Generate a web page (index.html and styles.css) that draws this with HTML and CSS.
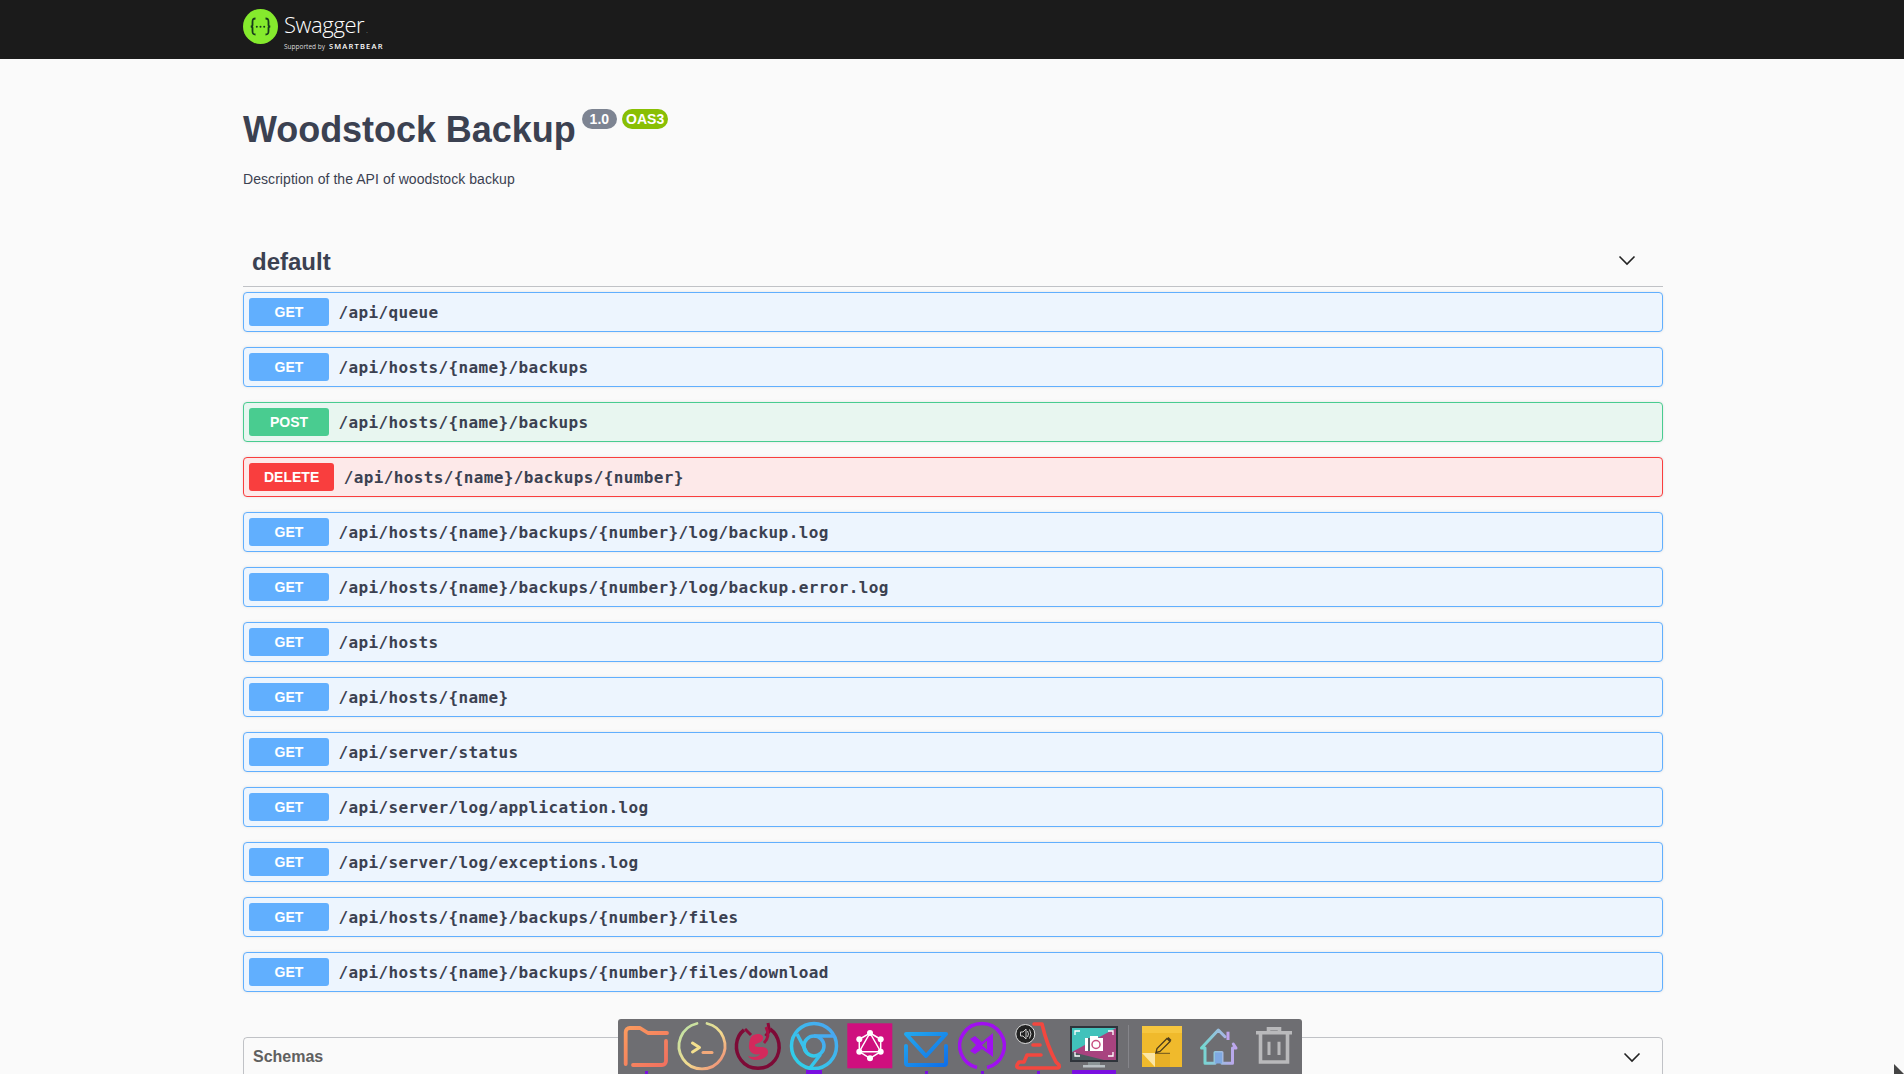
FILE: index.html
```html
<!DOCTYPE html>
<html lang="en">
<head>
<meta charset="utf-8">
<title>Woodstock Backup</title>
<link rel="stylesheet" href="styles.css">
</head>
<body>
<header class="topbar">
  <div class="wrapper topbar-inner">
    <svg class="logo-mark" width="35" height="35" viewBox="0 0 35 35"><circle cx="17.5" cy="17.5" r="17.5" fill="#85ea2d"/><path d="M12.5 9.5c-3 0-3 1.500-3 3.500v3c0 1.200-.8 1.500-1.800 1.500 1 0 1.800.3 1.800 1.500v3c0 2 0 3.500 3 3.500M22.500 9.500c3 0 3 1.500 3 3.500v3c0 1.200.8 1.500 1.800 1.500-1 0-1.800.3-1.800 1.500v3c0 2 0 3.500-3 3.500" fill="none" stroke="#173b1b" stroke-width="1.800"/><circle cx="13.800" cy="17.800" r="1" fill="#173b1b"/><circle cx="17.500" cy="17.800" r="1" fill="#173b1b"/><circle cx="21.200" cy="17.800" r="1" fill="#173b1b"/></svg>
    <div class="logo-text">
      <span class="logo-name">Swagger<span class="logo-dot">.</span></span>
      <span class="logo-sub"><span class="logo-by">Supported by</span> <span class="logo-bear">SMARTBEAR</span></span>
    </div>
  </div>
</header>

<main class="wrapper">
  <section class="info">
    <div class="title-row">
      <h1 class="title">Woodstock Backup</h1>
      <span class="badge badge-version">1.0</span>
      <span class="badge badge-oas">OAS3</span>
    </div>
    <p class="description">Description of the API of woodstock backup</p>
  </section>

  <section class="tag">
    <div class="tag-head">
      <h2 class="tag-name">default</h2>
      <svg class="chevron" width="20" height="20" viewBox="0 0 20 20"><path d="M2.500 5.500 10 13l7.500-7.500" fill="none" stroke="#222" stroke-width="1.600"/></svg>
    </div>
    <div class="op get"><span class="method">GET</span><span class="path">/api/queue</span></div>
    <div class="op get"><span class="method">GET</span><span class="path">/api/hosts/{name}/backups</span></div>
    <div class="op post"><span class="method">POST</span><span class="path">/api/hosts/{name}/backups</span></div>
    <div class="op delete"><span class="method">DELETE</span><span class="path">/api/hosts/{name}/backups/{number}</span></div>
    <div class="op get"><span class="method">GET</span><span class="path">/api/hosts/{name}/backups/{number}/log/backup.log</span></div>
    <div class="op get"><span class="method">GET</span><span class="path">/api/hosts/{name}/backups/{number}/log/backup.error.log</span></div>
    <div class="op get"><span class="method">GET</span><span class="path">/api/hosts</span></div>
    <div class="op get"><span class="method">GET</span><span class="path">/api/hosts/{name}</span></div>
    <div class="op get"><span class="method">GET</span><span class="path">/api/server/status</span></div>
    <div class="op get"><span class="method">GET</span><span class="path">/api/server/log/application.log</span></div>
    <div class="op get"><span class="method">GET</span><span class="path">/api/server/log/exceptions.log</span></div>
    <div class="op get"><span class="method">GET</span><span class="path">/api/hosts/{name}/backups/{number}/files</span></div>
    <div class="op get"><span class="method">GET</span><span class="path">/api/hosts/{name}/backups/{number}/files/download</span></div>
  </section>

  <section class="schemas">
    <h3 class="schemas-title">Schemas</h3>
    <svg class="chevron" width="20" height="20" viewBox="0 0 20 20"><path d="M2.500 5.500 10 13l7.500-7.500" fill="none" stroke="#222" stroke-width="1.600"/></svg>
  </section>
</main>

<nav class="dock">
  <div class="dock-item">
    <svg width="56" height="55" viewBox="0 0 56 55"><defs><linearGradient id="gf" x1="0" y1="0" x2="1" y2="1"><stop offset="0" stop-color="#fb9a5e"/><stop offset="1" stop-color="#f1705f"/></linearGradient></defs><path d="M7.700 45V13a4 4 0 0 1 4-4H22l8 5H49M48 22V42a4 4 0 0 1-4 4H15" fill="none" stroke="url(#gf)" stroke-width="3.800" stroke-linecap="round" stroke-linejoin="round"/><rect x="27" y="52" width="3" height="3" fill="#7a10e0"/></svg>
  </div>
  <div class="dock-item">
    <svg width="56" height="55" viewBox="0 0 56 55"><defs><linearGradient id="gt" x1="0" y1="0" x2="1" y2="1"><stop offset="0" stop-color="#b7e3a8"/><stop offset=".55" stop-color="#f3dc8f"/><stop offset="1" stop-color="#ef7d70"/></linearGradient></defs><path d="M33 4.500a23 23 0 1 1-10 0" fill="none" stroke="url(#gt)" stroke-width="2.800" stroke-linecap="round"/><path d="M18.500 24l7 4.500-7 4.500" fill="none" stroke="#f4e08e" stroke-width="3" stroke-linecap="round" stroke-linejoin="round"/><path d="M29 33.500h9" stroke="#f2a97a" stroke-width="3" stroke-linecap="round"/></svg>
  </div>
  <div class="dock-item">
    <svg width="56" height="55" viewBox="0 0 56 55"><path d="M14 11C5 18 4 32 11 41c8 11 26 11 34 0 7-10 5-24-5-31" fill="none" stroke="#7d0a36" stroke-width="3.500"/><path d="M38 4l1.500 8-4 5M15 10l6 6" fill="none" stroke="#8b0a39" stroke-width="3"/><path d="M21 18c5-5 13-3 12 2-1 4-7 4-8 6-1 3 7 1 11 3 4 3 2 9-4 11-6 2-12 1-14-3 5 2 11 1 12-2-7 2-12-3-11-9 0-3 1-6 2-8z" fill="#d32a5c"/><path d="M36 8c3 6 2 12-2 16" fill="none" stroke="#a81043" stroke-width="3"/></svg>
  </div>
  <div class="dock-item">
    <svg width="56" height="55" viewBox="0 0 56 55"><defs><linearGradient id="gc" x1="0" y1="1" x2="1" y2="0"><stop offset="0" stop-color="#2cd5e8"/><stop offset="1" stop-color="#4aa3f2"/></linearGradient></defs><g fill="none" stroke="url(#gc)" stroke-width="3.500"><circle cx="28" cy="27" r="22.500"/><circle cx="28" cy="27" r="10"/><path d="M28 17H49M11 15l10 19M34.500 35.500L24 49"/></g><rect x="20" y="51" width="16" height="4" fill="#7a10e0"/></svg>
  </div>
  <div class="dock-item">
    <svg width="56" height="55" viewBox="0 0 56 55"><rect x="5.300" y="4.300" width="45" height="45" fill="#cf0f7e"/><g fill="none" stroke="#fff" stroke-width="1.500"><path d="M28 14L38.700 20.300V32.700L28 39.300L17.300 32.700V20.300Z"/><path d="M28 14L38.700 32.700H17.300Z"/></g><g fill="#fff"><circle cx="28" cy="14" r="3"/><circle cx="38.700" cy="20.300" r="3"/><circle cx="38.700" cy="32.700" r="3"/><circle cx="28" cy="39.300" r="3"/><circle cx="17.300" cy="32.700" r="3"/><circle cx="17.300" cy="20.300" r="3"/></g></svg>
  </div>
  <div class="dock-item">
    <svg width="56" height="55" viewBox="0 0 56 55"><defs><linearGradient id="gm" x1="0" y1="0" x2="1" y2="1"><stop offset="0" stop-color="#22a7ee"/><stop offset="1" stop-color="#0f70ea"/></linearGradient></defs><path d="M8 27V44a2 2 0 0 0 2 2H46a2 2 0 0 0 2-2V27M8 15h40L28 37Z" fill="none" stroke="url(#gm)" stroke-width="4" stroke-linejoin="round" stroke-linecap="round"/><rect x="27" y="52" width="3" height="3" fill="#7a10e0"/></svg>
  </div>
  <div class="dock-item">
    <svg width="56" height="55" viewBox="0 0 56 55"><path d="M23 48.500a22.300 22.300 0 1 1 10 0" fill="none" stroke="#a010f0" stroke-width="3.500"/><path fill-rule="evenodd" d="M39 14V38L28 30 21 35 16 32 22 26 16 20 21 17 28 23ZM33 21.500 28 26.200 33 30.500Z" fill="#a010f0"/><rect x="27" y="52" width="3" height="3" fill="#7a10e0"/></svg>
  </div>
  <div class="dock-item">
    <svg width="56" height="55" viewBox="0 0 56 55"><g fill="none" stroke="#f3473f" stroke-width="3.600" stroke-linecap="round" stroke-linejoin="round"><path d="M24 5h8c3 13 8 27 14 38l3 3q1 3-2 3H10q-4 0-3-3l2-3h5l3-7h14"/><path d="M23 26h7"/></g><rect x="27" y="52" width="3" height="3" fill="#7a10e0"/><circle cx="15.300" cy="15" r="9.500" fill="#222" stroke="#ddd" stroke-width="1"/><path d="M10.500 13h2.500l3-3v10l-3-3h-2.500zM17.500 12q2 3 0 6M19.500 10.500q3 4.500 0 9" fill="none" stroke="#ccc" stroke-width="1"/></svg>
  </div>
  <div class="dock-item">
    <svg width="56" height="55" viewBox="0 0 56 55"><rect x="4" y="7" width="48" height="36" fill="#2f343b"/><rect x="6" y="9" width="44" height="32" fill="#41c2bb"/><path d="M6 33 50 9V41H6Z" fill="#a8437f"/><path d="M6 33V41H38Z" fill="#4a5a5e"/><path d="M9 16v-4h5M42 12h5v4M9 33v4h5M42 37h5v-4" fill="none" stroke="#fff" stroke-width="1.300"/><rect x="19" y="19" width="18" height="13" fill="#fff"/><rect x="24" y="17" width="8" height="3" fill="#fff"/><rect x="22" y="19" width="2" height="13" fill="#55606a"/><circle cx="30" cy="25.500" r="4" fill="none" stroke="#c74f80" stroke-width="1.500"/><rect x="22" y="43" width="12" height="3" fill="#8b9496"/><rect x="17" y="46" width="22" height="2.500" fill="#b9c0c4"/><rect x="6" y="51" width="44" height="4" fill="#7a10e0"/></svg>
  </div>
  <div class="dock-sep"></div>
  <div class="dock-item">
    <svg width="56" height="55" viewBox="0 0 56 55"><rect x="8" y="7" width="40" height="41" fill="#f0ba2c"/><rect x="8" y="7" width="40" height="7" fill="#f6c63f"/><path d="M21 34H36V48H21Z" fill="#e0a825" opacity=".55"/><path d="M8 34h13v14z" fill="#fbe6a6"/><path d="M22 33.500l1-4L33 19.500l3 3L26 32.500z" fill="none" stroke="#4b3c1c" stroke-width="1.300"/><path d="M33 19.500l1.500-1.500 3 3-1.500 1.500z" fill="#4b3c1c"/><path d="M21 34.300H36" stroke="#4b3c1c" stroke-width=".8"/></svg>
  </div>
  <div class="dock-item">
    <svg width="56" height="55" viewBox="0 0 56 55"><defs><linearGradient id="gh" gradientUnits="userSpaceOnUse" x1="10" y1="0" x2="46" y2="0"><stop offset="0" stop-color="#6fdccf"/><stop offset="1" stop-color="#c0a4ee"/></linearGradient></defs><path d="M11.500 29L28.300 11 35 17.700M11.500 29H15V44.300H25V33.500H32V44.300H42.500V29H46L43.300 25" fill="none" stroke="url(#gh)" stroke-width="3" stroke-linejoin="round" stroke-linecap="round"/><path d="M38 12.700V21" stroke="#c0a4ee" stroke-width="3"/><rect x="25" y="33.500" width="7" height="11" fill="#7fa9e2"/></svg>
  </div>
  <div class="dock-item">
    <svg width="56" height="55" viewBox="0 0 56 55"><g fill="none" stroke="#b9b9bb" stroke-width="3.600"><path d="M10 13.700H46"/><path d="M22.500 13.700V9.800H33.500V13.700"/><path d="M14.500 13.700V43H41.500V13.700"/><path d="M23 22.700V36M33 22.700V36" stroke-width="3"/></g></svg>
  </div>
</nav>

<svg class="cursor" width="10" height="12" viewBox="0 0 10 12"><path d="M0 0 10 10V12H0Z" fill="#444"/></svg>
</body>
</html>
```
FILE: styles.css
```css
* { box-sizing: border-box; }
html, body { margin: 0; height: 100%; overflow: hidden; }
body { background: #fafafa; font-family: "Liberation Sans", Arial, sans-serif; color: #3b4151; }

.wrapper { width: 1460px; margin-left: 223px; padding: 0 20px; }

.topbar { height: 59px; background: #1b1b1b; }
.topbar-inner { display: flex; align-items: flex-start; gap: 6px; padding-top: 9px; }
.logo-mark { flex: none; }
.logo-text { display: flex; flex-direction: column; color: #fff; }
.logo-name { font-family: "Open Sans", sans-serif; font-weight: 300; font-size: 22px; line-height: 28px; letter-spacing: -.4px; margin-top: 1px; }
.logo-dot { font-size: 6px; margin-left: 2px; }
.logo-sub { display: flex; align-items: baseline; gap: 4px; font-family: "Open Sans", sans-serif; line-height: 9px; margin-top: -3px; }
.logo-by { font-size: 6.500px; color: #ddd; }
.logo-bear { font-size: 7.500px; font-weight: 600; letter-spacing: 1.200px; }

.info { padding-top: 50px; }
.title-row { display: flex; align-items: flex-start; height: 40px; }
.title { margin: 1px 0 0 0; font-size: 36px; line-height: 40px; font-weight: 700; letter-spacing: -.05px; color: #3b4151; }
.badge { height: 20px; line-height: 20px; border-radius: 10px; font-size: 14px; font-weight: 700; color: #fff; }
.badge-version { background: #7d8492; margin-left: 6px; padding: 0 8px; }
.badge-oas { background: #89bf04; margin-left: 5px; padding: 0 4px; }
.description { margin: 21px 0 0; font-size: 14px; line-height: 18px; letter-spacing: .06px; color: #3b4151; }

.tag { margin-top: 49px; }
.tag-head { display: flex; justify-content: space-between; align-items: center; height: 50px; padding: 0 26px 0 9px; border-bottom: 1px solid rgba(59,65,81,.3); margin-bottom: 5px; }
.tag-name { margin: 0; font-size: 24px; line-height: 32px; font-weight: 700; color: #3b4151; }
.chevron { flex: none; }
.tag-head .chevron { margin-bottom: 2px; }

.op { display: flex; align-items: center; height: 40px; padding: 0 5px; margin-bottom: 15px; border: 1px solid; border-radius: 4px; box-shadow: 0 0 3px rgba(0,0,0,.1); }
.op.get { background: #edf5fe; border-color: #61affe; }
.op.post { background: #e8f6f0; border-color: #49cc90; }
.op.delete { background: #fde9e9; border-color: #f93e3e; }
.method { min-width: 80px; height: 28px; line-height: 28px; padding: 0 15px; border-radius: 3px; text-align: center; font-size: 14px; font-weight: 700; color: #fff; }
.get .method { background: #61affe; }
.post .method { background: #49cc90; }
.delete .method { background: #f93e3e; }
.path { padding-left: 9.500px; font-family: "DejaVu Sans Mono", monospace; font-size: 16px; font-weight: 700; letter-spacing: .37px; color: #3b4151; }

.schemas { display: flex; justify-content: space-between; align-items: flex-start; height: 60px; margin-top: 45px; padding: 0 20px 0 9px; border: 1px solid rgba(59,65,81,.3); border-radius: 4px; }
.schemas-title { margin: 0; font-size: 16px; line-height: 38px; font-weight: 700; color: #606060; }
.schemas .chevron { margin-top: 10px; }

.dock { position: fixed; left: 618px; bottom: 0; display: flex; height: 55px; background: #6e6e72; border-radius: 3px 3px 0 0; }
.dock-item { width: 56px; height: 55px; flex: none; }
.dock-item svg { display: block; }
.dock-sep { width: 12px; height: 43px; margin-top: 6px; }
.dock-sep::after { content: ""; display: block; width: 1px; height: 100%; margin: 0 auto; background: #85858a; }

.cursor { position: fixed; left: 1894px; top: 1064px; }
```
